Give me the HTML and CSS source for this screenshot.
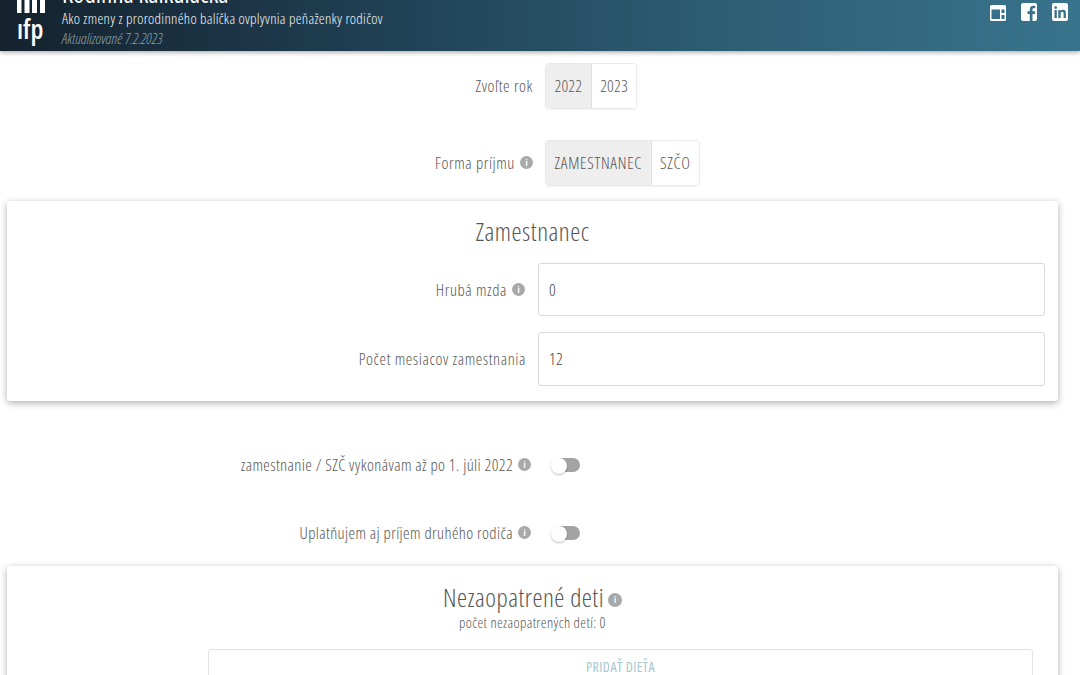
FILE: index.html
```html
<!DOCTYPE html>
<html lang="sk">
<head>
<meta charset="utf-8">
<title>Rodinná kalkulačka</title>
<link rel="stylesheet" href="styles.css">
</head>
<body>
<header class="topbar">
  <div class="logo">
    <svg class="logo-bars" width="28" height="13" viewBox="0 0 28 13"><path d="M0 0h4.500v13H0zM7.500 0h5v13h-5zM15 0h5v13h-5zM23 0h5v13h-5z" fill="#fff"/></svg>
    <span class="logo-word">ıfp</span>
  </div>
  <div class="head-text">
    <div class="app-title">Rodinná kalkulačka</div>
    <div class="app-sub">Ako zmeny z prorodinného balíčka ovplyvnia peňaženky rodičov</div>
    <div class="app-date">Aktualizované 7.2.2023</div>
  </div>
  <div class="social">
    <svg class="icon-web" width="16" height="16" viewBox="0 0 16 16"><rect x="0" y="0" width="16" height="16" rx="1.500" fill="#fff"/><rect x="1.500" y="4.500" width="8.500" height="9.500" fill="#36708a"/><rect x="11.500" y="4.500" width="3" height="3.500" fill="#36708a"/><rect x="11.500" y="10" width="3" height="4" fill="#36708a"/></svg>
    <svg width="16" height="18" viewBox="0 0 16 18"><rect x="0" y="0" width="16" height="18" rx="2" fill="#fff"/><path d="M11.500 18v-7h2.300l.4-2.800h-2.700V6.600c0-.8.300-1.300 1.400-1.300h1.400V2.800c-.3 0-1.100-.1-2-.1-2.100 0-3.500 1.300-3.500 3.600v1.900H6.500V11h2.300v7z" fill="#36708a"/></svg>
    <svg width="16" height="18" viewBox="0 0 16 18"><rect x="0" y="0" width="16" height="18" rx="2" fill="#fff"/><path d="M2.500 7h2.300v8H2.500zM3.650 3.200a1.350 1.350 0 1 1 0 2.700 1.350 1.350 0 0 1 0-2.700zM6.300 7h2.200v1.100c.4-.7 1.300-1.300 2.500-1.300 2.400 0 2.900 1.500 2.900 3.600V15h-2.300v-4.100c0-1 0-2.200-1.300-2.200s-1.600 1-1.600 2.100V15H6.300z" fill="#36708a"/></svg>
  </div>
</header>

<main class="page">
  <div class="choice-row year-row">
    <div class="row-label"><span class="txt">Zvoľte rok</span></div>
    <div class="segments">
      <span class="segment active">2022</span><span class="segment">2023</span>
    </div>
  </div>
  <div class="choice-row income-row">
    <div class="row-label"><span class="txt">Forma príjmu</span><i class="info">i</i></div>
    <div class="segments">
      <span class="segment active">ZAMESTNANEC</span><span class="segment">SZČO</span>
    </div>
  </div>

  <section class="card employee">
    <h2 class="card-title">Zamestnanec</h2>
    <div class="field first">
      <label class="field-label"><span class="txt">Hrubá mzda</span><i class="info">i</i></label>
      <div class="input"><span class="txt">0</span></div>
    </div>
    <div class="field second">
      <label class="field-label"><span class="txt">Počet mesiacov zamestnania</span></label>
      <div class="input"><span class="txt">12</span></div>
    </div>
  </section>

  <div class="toggle-row first-toggle">
    <div class="toggle-label"><span class="txt">zamestnanie / SZČ vykonávam až po 1. júli 2022</span><i class="info">i</i></div>
    <span class="toggle"><span class="knob"></span></span>
  </div>
  <div class="toggle-row second-toggle">
    <div class="toggle-label"><span class="txt">Uplatňujem aj príjem druhého rodiča</span><i class="info">i</i></div>
    <span class="toggle"><span class="knob"></span></span>
  </div>

  <section class="card kids">
    <h2 class="card-title kids-title">Nezaopatrené deti<i class="info big">i</i></h2>
    <p class="kids-count">počet nezaopatrených detí: 0</p>
    <div class="add-child">PRIDAŤ DIEŤA</div>
  </section>
</main>
</body>
</html>
```
FILE: styles.css
```css
html, body { margin: 0; height: 675px; overflow: hidden; background: #fff; }
body { font-family: "Open Sans", sans-serif; font-stretch: 75%; font-weight: 300; letter-spacing: .4px; color: #555; font-size: 16.500px; }

.topbar {
  height: 51px; display: flex; align-items: flex-end; box-sizing: border-box;
  background: linear-gradient(90deg, #14222e 0%, #1e3b4e 30%, #2c5c72 65%, #38748c 100%);
  box-shadow: 0 1px 5px rgba(0,0,0,.4); color: #fff; overflow: hidden; padding-left: 17px; position: relative; letter-spacing: 0;
}
.logo { width: 45px; height: 51px; display: flex; flex-direction: column; flex: none; overflow: hidden; }
.logo-bars { display: block; }
.logo-word { font-size: 27px; line-height: 27px; font-weight: 600; margin-top: 2px; }
.head-text { flex: 1; display: flex; flex-direction: column; height: 51px; justify-content: flex-end; padding-bottom: 5px; box-sizing: border-box; font-weight: 400; }
.app-title { font-size: 25px; line-height: 18px; margin-bottom: 7px; }
.app-sub { font-size: 14.800px; line-height: 18px; font-weight: 300; letter-spacing: .3px; color: #f4f7f8; margin-bottom: 3px; }
.app-date { font-size: 15px; line-height: 16px; font-style: italic; font-weight: 300; color: #93a3ac; }
.social { position: absolute; right: 12px; top: 3px; display: flex; gap: 15px; align-items: flex-start; }
.icon-web { margin-top: 2px; }

.choice-row { display: grid; grid-template-columns: 533px auto; column-gap: 12px; align-items: center; justify-content: start; }
.year-row { margin-top: 12px; }
.income-row { margin-top: 31px; }
.row-label, .field-label, .toggle-label { display: flex; justify-content: flex-end; align-items: center; gap: 5px; }
.row-label { padding-bottom: 2px; letter-spacing: .6px; }
.field-label { letter-spacing: .6px; }
.segments { display: inline-flex; height: 46px; border: 1px solid #e9e9e9; border-radius: 4px; box-sizing: border-box; overflow: hidden; width: max-content; box-shadow: 0 1px 2px rgba(0,0,0,.06); }
.segment { padding: 0 8.500px 2px; display: flex; align-items: center; background: #fff; }
.segment.active { background: #eeeeee; border-right: 1px solid #dedede; }
.year-row .segment { letter-spacing: .2px; }
.income-row .segment { letter-spacing: .7px; }

.info { display: inline-flex; width: 13px; height: 13px; border-radius: 50%; background: #a9a9a9; color: #fff; font-size: 9px; font-style: normal; font-weight: 700; letter-spacing: 0; align-items: center; justify-content: center; flex: none; }
.info.big { margin-left: 4px; width: 14px; height: 14px; vertical-align: 4px; }
.field-label .info { margin-right: 1px; }

.card { background: #fff; margin: 0 22px 0 7px; border-radius: 3px; box-shadow: 0 2px 7px rgba(0,0,0,.32); }
.employee { margin-top: 15px; height: 200px; padding-top: 16px; box-sizing: border-box; }
.card-title { margin: 0; font-weight: 300; font-size: 25.500px; letter-spacing: .5px; line-height: 28px; text-align: center; color: #555; }
.field { display: grid; grid-template-columns: 519px 507px; column-gap: 12px; margin-top: 16px; align-items: center; }
.field.first { margin-top: 18px; }
.input { height: 54px; box-sizing: border-box; border: 1px solid #d9d9d9; border-radius: 3px; display: flex; align-items: center; padding-left: 10px; color: #444; }
.field.first .input { height: 53px; }
.field.second .input { padding-bottom: 2px; }
.field.second .field-label { padding-bottom: 2px; }

.toggle-row { display: grid; grid-template-columns: 531px auto; column-gap: 20px; align-items: center; justify-content: start; height: 20px; }
.first-toggle { margin-top: 52px; }
.second-toggle { margin-top: 48px; }
.toggle { position: relative; display: block; width: 29px; height: 14px; }
.toggle::before { content: ""; position: absolute; left: 7px; right: 0; top: 0; height: 14px; background: #a3a3a3; border-radius: 0 7px 7px 0; }
.knob { position: absolute; left: 0; top: 0; width: 16px; height: 16px; border-radius: 50%; background: #fff; box-shadow: 0 1px 2px rgba(0,0,0,.25); }

.kids { margin-top: 25px; height: 140px; padding-top: 17px; box-sizing: border-box; }
.kids-title { line-height: 28px; }
.kids-count { margin: 4px 0 0; text-align: center; font-size: 14.500px; line-height: 16px; color: #555; }
.add-child { margin: 18px 25px 0 201px; height: 40px; border: 1px solid #dfe4e6; border-radius: 3px; text-align: center; font-size: 14px; font-weight: 400; line-height: 34px; color: #a6c7ce; }
```
